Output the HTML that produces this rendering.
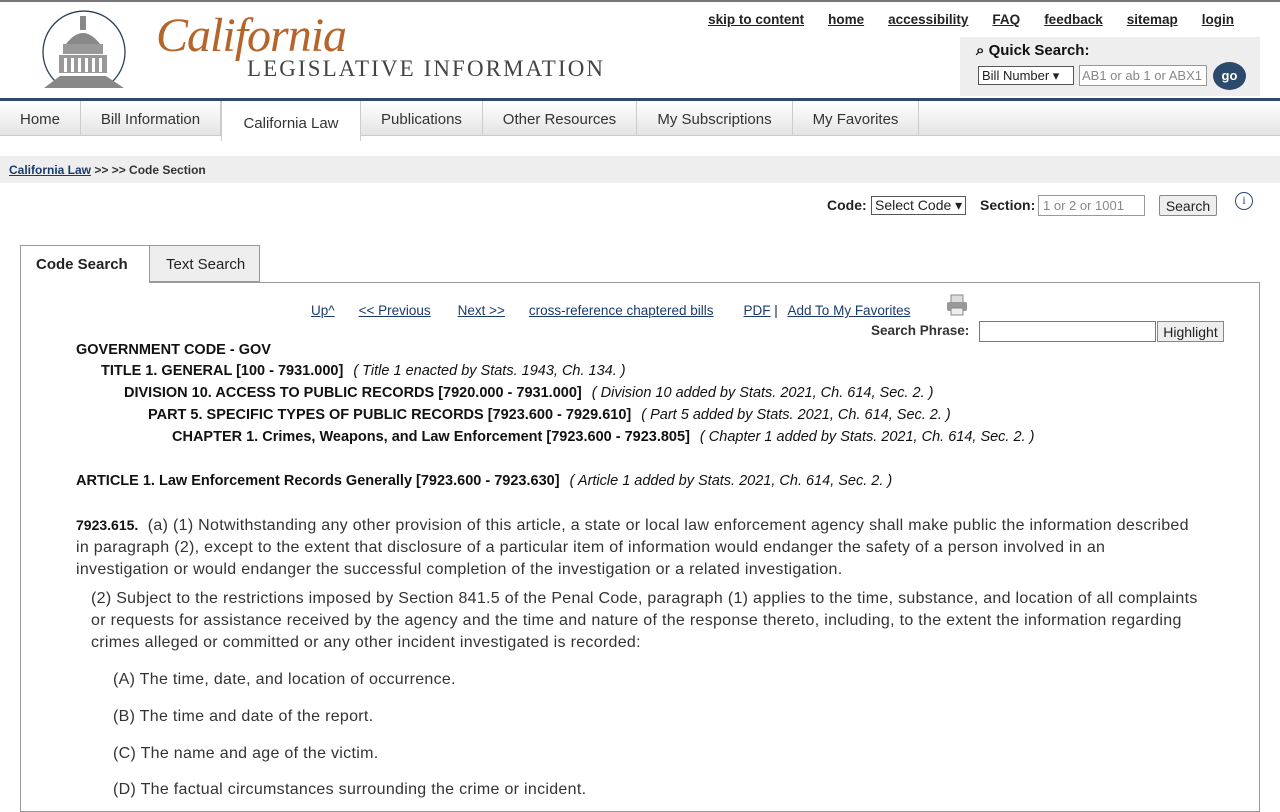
<!DOCTYPE html>
<html><head><meta charset="utf-8">
<style>
*{box-sizing:border-box}
body{margin:0;width:1280px;height:800px;overflow:hidden;background:#fff;font-family:"Liberation Sans",Arial,sans-serif;color:#222;position:relative}
.abs{position:absolute;white-space:nowrap}
a{color:#222}
.top a{font-weight:bold;font-size:13.5px;color:#222;text-decoration:underline;margin-left:24px}
.nav{position:absolute;top:101px;left:0;width:1280px;height:35px;background:linear-gradient(#fff,#e4e4e4);border-bottom:1px solid #ccc}
.nav div{position:absolute;top:0;height:35px;line-height:37px;font-size:15px;color:#333;text-align:center;border-right:1px solid #ccc}
.sel{background:#fff;height:40px!important;line-height:45px!important}
.lnk{color:#1a3a6b;text-decoration:underline;font-size:13.5px}
.h{font-size:14.5px;font-weight:bold;color:#111;position:absolute;white-space:nowrap}
.h i{font-weight:normal;margin-left:6px}
p.t{position:absolute;margin:0;font-size:16px;line-height:22px;color:#333;letter-spacing:0.3px}
</style></head><body>
<div class="abs" style="top:0;left:0;width:1280px;height:2px;background:#777"></div>
<svg class="abs" style="left:40px;top:10px" width="88" height="80" viewBox="0 0 88 80">
<path d="M16 72 A41 41 0 1 1 72 72" fill="none" stroke="#2c3e55" stroke-width="1.3"/>
<rect x="40" y="6" width="6" height="14" fill="#888"/>
<path d="M26 34 Q43 12 60 34 Z" fill="#888"/>
<rect x="23" y="34" width="40" height="10" fill="#999"/>
<rect x="19" y="45" width="48" height="18" fill="#999"/>
<g fill="#fff"><rect x="24" y="48" width="3" height="14"/><rect x="31" y="48" width="3" height="14"/><rect x="38" y="48" width="3" height="14"/><rect x="45" y="48" width="3" height="14"/><rect x="52" y="48" width="3" height="14"/><rect x="59" y="48" width="3" height="14"/></g>
<path d="M4 78 L20 66 H66 L84 78 Z" fill="#888"/>
</svg>
<div class="abs" style="left:156px;top:8px;font-family:'Liberation Serif',serif;font-style:italic;font-size:48px;color:#b5642a;letter-spacing:-1px">California</div>
<div class="abs" style="left:247px;top:56px;font-family:'Liberation Serif',serif;font-size:23px;letter-spacing:2.1px;color:#444">LEGISLATIVE INFORMATION</div>
<div class="abs top" style="right:46px;top:11px"><a>skip to content</a><a>home</a><a>accessibility</a><a>FAQ</a><a>feedback</a><a>sitemap</a><a>login</a></div>
<div class="abs" style="left:960px;top:37px;width:300px;height:59px;background:#eee"></div>
<div class="abs" style="left:976px;top:42px;font-weight:bold;font-size:15px;color:#111">&#x2315; Quick Search:</div>
<div class="abs" style="left:978px;top:66px;width:96px;height:19px;border:1px solid #555;background:#fff;font-size:13px;padding:1px 3px">Bill Number ▾</div>
<div class="abs" style="left:1079px;top:65px;width:128px;height:21px;border:1px solid #999;background:#fff;font-size:13px;color:#888;padding:2px 2px;overflow:hidden">AB1 or ab 1 or ABX1</div>
<div class="abs" style="left:1213px;top:62px;width:33px;height:28px;border-radius:50%;background:#2c4a6b;color:#fff;font-weight:bold;font-size:13px;text-align:center;line-height:28px">go</div>
<div class="abs" style="top:98px;left:0;width:1280px;height:3px;background:#2c4a6b"></div>
<div class="nav">
<div style="left:0;width:81px">Home</div>
<div style="left:81px;width:140px">Bill Information</div>
<div class="sel" style="left:221px;width:140px;border-left:1px solid #ccc">California Law</div>
<div style="left:361px;width:122px">Publications</div>
<div style="left:483px;width:154px">Other Resources</div>
<div style="left:637px;width:156px">My Subscriptions</div>
<div style="left:793px;width:126px">My Favorites</div>
</div>
<div class="abs" style="top:156px;left:0;width:1280px;height:27px;background:#eee;font-size:12px;font-weight:bold;line-height:28px;padding-left:9px;color:#333"><span style="color:#1a3a6b;text-decoration:underline">California Law</span> &gt;&gt; &gt;&gt; Code Section</div>
<div class="abs" style="left:827px;top:197px;font-size:14px;font-weight:bold">Code:</div>
<div class="abs" style="left:871px;top:196px;width:95px;height:19px;border:1px solid #555;font-size:14px;padding:0 3px;overflow:hidden">Select Code ▾</div>
<div class="abs" style="left:980px;top:197px;font-size:14px;font-weight:bold">Section:</div>
<div class="abs" style="left:1038px;top:195px;width:107px;height:21px;border:1px solid #999;font-size:13px;color:#888;padding:2px 4px">1 or 2 or 1001</div>
<div class="abs" style="left:1159px;top:195px;width:58px;height:21px;border:1px solid #888;background:#eee;border-radius:2px;font-size:14px;text-align:center;line-height:20px">Search</div>
<div class="abs" style="left:1235px;top:192px;width:18px;height:18px;border:1.5px solid #2c4a6b;border-radius:50%;color:#2c4a6b;font-size:12px;text-align:center;line-height:15px;font-family:'Liberation Serif',serif">i</div>
<div class="abs" style="left:20px;top:245px;width:130px;height:38px;border:1px solid #999;border-bottom:none;background:#fff;font-size:15px;font-weight:bold;padding-left:15px;line-height:38px;z-index:2">Code Search</div>
<div class="abs" style="left:149px;top:245px;width:111px;height:37px;border:1px solid #999;background:#eee;font-size:15px;padding-left:16px;line-height:38px">Text Search</div>
<div class="abs" style="left:20px;top:282px;width:1240px;height:530px;border:1px solid #999"></div>
<div class="abs" style="top:303px;left:311px;font-size:13.5px"><span class="lnk">Up^</span><span class="lnk" style="margin-left:24px">&lt;&lt; Previous</span><span class="lnk" style="margin-left:27px">Next &gt;&gt;</span><span class="lnk" style="margin-left:24px">cross-reference chaptered bills</span><span class="lnk" style="margin-left:30px">PDF</span> | <span class="lnk" style="margin-left:6px">Add To My Favorites</span></div>
<svg class="abs" style="left:946px;top:294px" width="22" height="22"><rect x="5" y="1" width="12" height="8" fill="#ddd" stroke="#888"/><rect x="1" y="8" width="20" height="9" rx="2" fill="#999"/><rect x="5" y="14" width="12" height="7" fill="#eee" stroke="#888"/></svg>
<div class="abs" style="left:871px;top:323px;font-size:13.5px;font-weight:bold;color:#333">Search Phrase:</div>
<div class="abs" style="left:979px;top:321px;width:177px;height:21px;border:1px solid #777"></div>
<div class="abs" style="left:1157px;top:321px;width:67px;height:21px;border:1px solid #888;background:#eee;font-size:14px;text-align:center;line-height:20px">Highlight</div>
<div class="h" style="left:76px;top:342px">GOVERNMENT CODE - GOV</div>
<div class="h" style="left:101px;top:363px">TITLE 1. GENERAL [100 - 7931.000]<i> ( Title 1 enacted by Stats. 1943, Ch. 134. )</i></div>
<div class="h" style="left:124px;top:385px">DIVISION 10. ACCESS TO PUBLIC RECORDS [7920.000 - 7931.000]<i> ( Division 10 added by Stats. 2021, Ch. 614, Sec. 2. )</i></div>
<div class="h" style="left:148px;top:407px">PART 5. SPECIFIC TYPES OF PUBLIC RECORDS [7923.600 - 7929.610]<i> ( Part 5 added by Stats. 2021, Ch. 614, Sec. 2. )</i></div>
<div class="h" style="left:172px;top:429px">CHAPTER 1. Crimes, Weapons, and Law Enforcement [7923.600 - 7923.805]<i> ( Chapter 1 added by Stats. 2021, Ch. 614, Sec. 2. )</i></div>
<div class="h" style="left:76px;top:473px">ARTICLE 1. Law Enforcement Records Generally [7923.600 - 7923.630]<i> ( Article 1 added by Stats. 2021, Ch. 614, Sec. 2. )</i></div>
<p class="t" style="left:76px;top:514px;width:1124px"><b style="font-size:14px;color:#111;letter-spacing:0">7923.615.</b>&nbsp; (a) (1) Notwithstanding any other provision of this article, a state or local law enforcement agency shall make public the information described in paragraph (2), except to the extent that disclosure of a particular item of information would endanger the safety of a person involved in an investigation or would endanger the successful completion of the investigation or a related investigation.</p>
<p class="t" style="left:91px;top:588px;width:1122px">(2) Subject to the restrictions imposed by Section 841.5 of the Penal Code, paragraph (1) applies to the time, substance, and location of all complaints or requests for assistance received by the agency and the time and nature of the response thereto, including, to the extent the information regarding crimes alleged or committed or any other incident investigated is recorded:</p>
<p class="t" style="left:113px;top:669px">(A) The time, date, and location of occurrence.</p>
<p class="t" style="left:113px;top:706px">(B) The time and date of the report.</p>
<p class="t" style="left:113px;top:743px">(C) The name and age of the victim.</p>
<p class="t" style="left:113px;top:779px">(D) The factual circumstances surrounding the crime or incident.</p>
</body></html>
